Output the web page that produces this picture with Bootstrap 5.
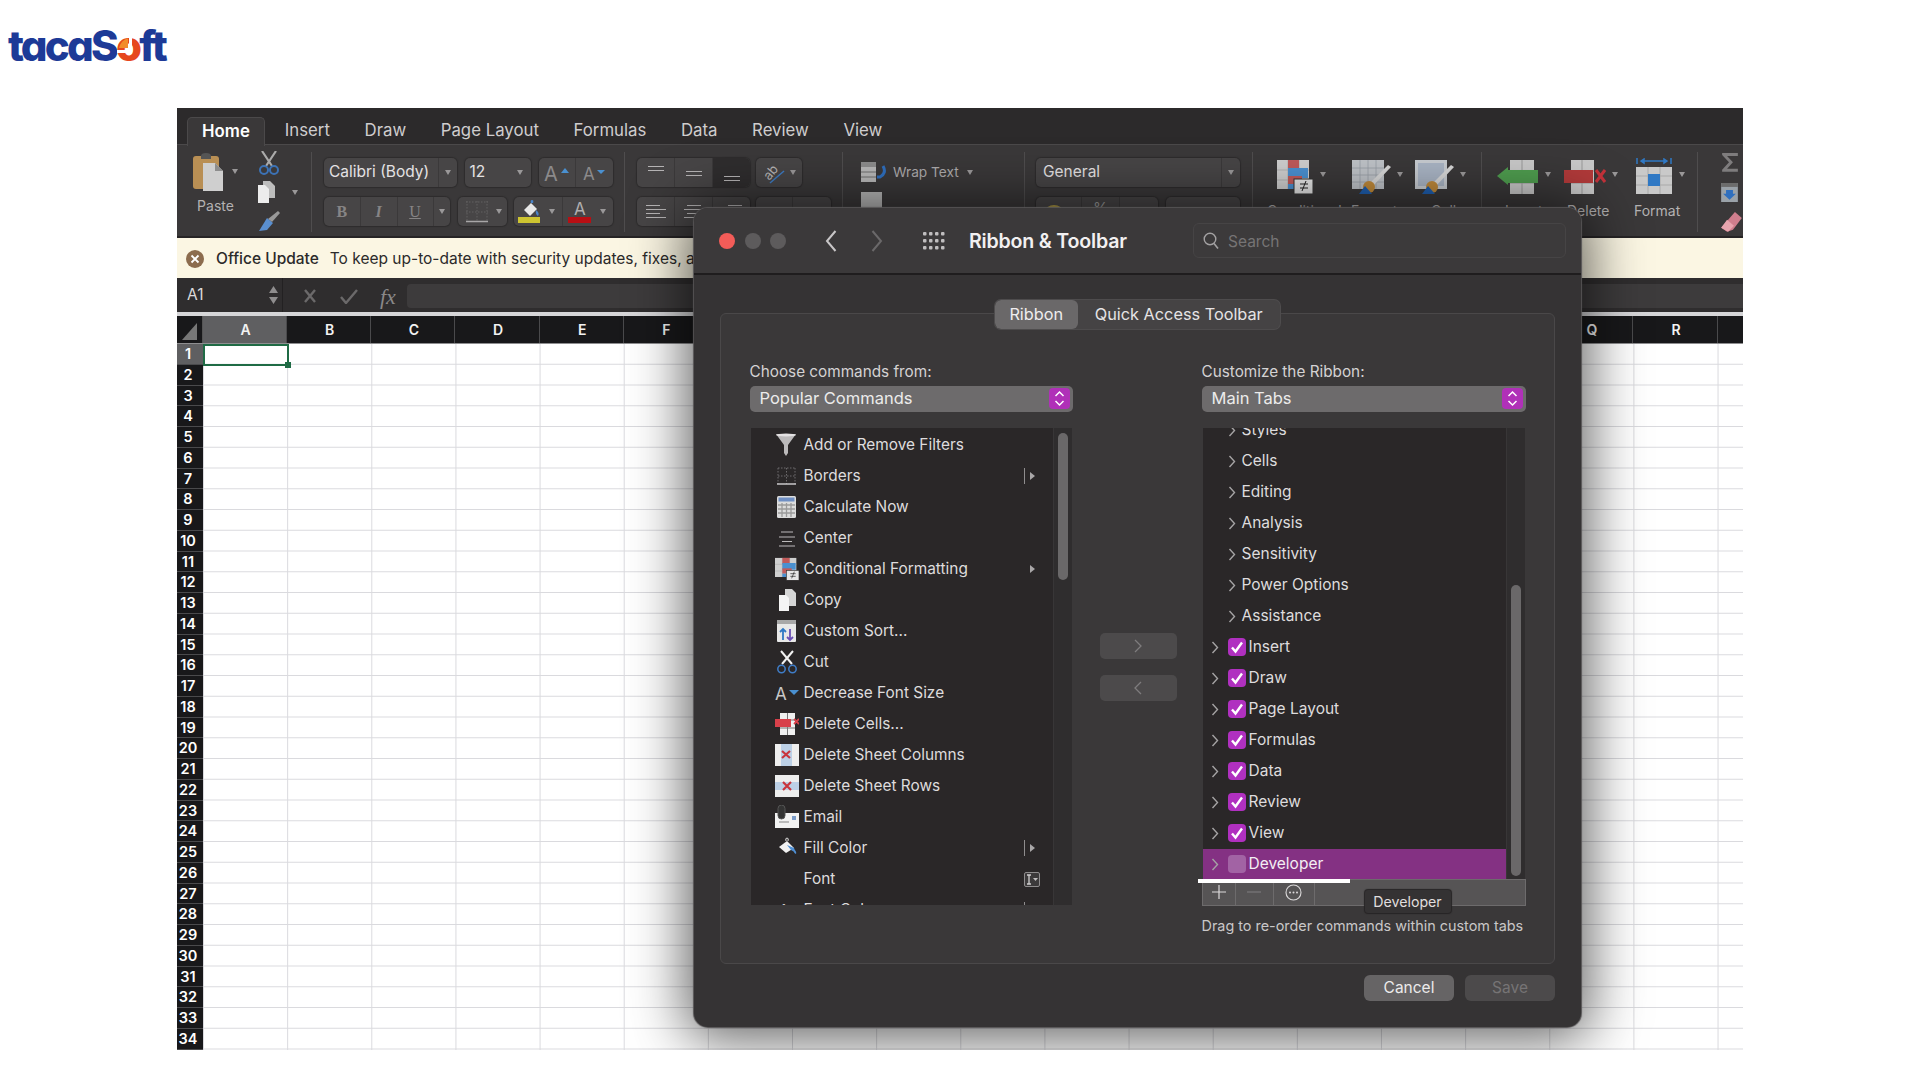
<!DOCTYPE html>
<html lang="en">
<head>
<meta charset="utf-8">
<title>Ribbon &amp; Toolbar</title>
<link href="https://cdn.jsdelivr.net/npm/bootstrap@5.3.0/dist/css/bootstrap.min.css" rel="stylesheet">
<style>
html,body{margin:0;background:#fff;overflow:hidden}
body{font-family:Inter,"Liberation Sans",sans-serif;width:1920px;height:1080px;color:#ddd}
.logo-bar{height:108px;padding:21px 0 0 8px}
.brand{display:inline-block;font:800 42px/50px Inter,"Liberation Sans",sans-serif;letter-spacing:-2.8px;color:#1d3a97;font-feature-settings:"cv11"}
.brand-o{color:#e6471d;position:relative;display:inline-block}
.brand-q{position:absolute;left:1px;top:15px;width:26px;height:30px}
.xl-app{margin-left:177px;width:1566px;height:942px;overflow:hidden;background:#fff}
.tabbar{height:37px;background:#2c2a2b;border-bottom:1px solid #4b494a;padding:9px 0 0 10px;font-size:16.8px;color:#cfcdce}
.xtab{padding:0 17.3px;line-height:26px;white-space:nowrap}
.xtab-on{width:78px;padding:0;text-align:center;background:#3a3839;border:1px solid #4b494a;border-bottom:0;border-radius:5px 5px 0 0;color:#fff;font-weight:600;margin:0 2.5px -1px 0;height:29px}
.ribbon{height:93px;background:#3a3839;border-bottom:2px solid #262425}
.rgroup{height:80px;margin-top:7px;border-right:1px solid #4f4d4e;flex:none;position:relative}
.g1{width:135px;padding-left:16px}.g2{width:313px;padding:6px 0 0 12px}.g3{width:218px;padding:6px 0 0 12px}
.g4{width:182px;padding:8px 0 0 18px}.g5{width:228px;padding:6px 0 0 11px}.g6{width:229px}.g7{width:216px}.g8{width:45px;border:0;padding-left:23px}
.rline{height:29px;gap:8px;margin-bottom:10px}
.ctl{height:29px;background:#474546;border-radius:5px;box-shadow:0 0 1px 1px #2e2c2d;flex:none;overflow:hidden;color:#e4e2e3;font-size:15.5px}
.ctl-txt{padding-bottom:2px}
.seg{height:100%;border-right:1px solid #3b393a;flex:none}
.seg:last-child{border:0}
.tri{width:0;height:0;border-left:4px solid transparent;border-right:4px solid transparent;border-top:5px solid #9a9899;flex:none}
.tri-sm{border-left-width:3.5px;border-right-width:3.5px;border-top-width:5px}
.w132{width:132.5px}.w66{width:66px}.w74{width:74px}.w125{width:125.5px}.w49{width:49px}.w99{width:99px}.w113{width:113px}.w46{width:46px}.w75{width:75px}.w204{width:204px}.w122{width:122px}
.fmt{color:#868485;font:700 16px/1 "Liberation Serif",serif}
.paste-col{width:66px;height:80px}
.paste-lab{font-size:14px;color:#b4b2b3;margin-top:4px;width:45px;text-align:center}
.mini-col{width:45px;margin-left:-1px;margin-top:-1px}
.wrap-lab{font-size:13.7px;color:#aeacad;margin:0 8px 0 7px}
.big-row{height:42px;padding-top:8px}
.lab-row{font-size:14px;color:#b4b2b3;line-height:18px;margin-top:2px;white-space:nowrap}
.update-bar{height:40px;background:#fbf6e3;padding-left:9px;color:#2b2a2a;font-size:15.5px;white-space:nowrap;overflow:hidden;padding-top:2px}
.update-bar b{font-weight:500;margin:0 11px 0 0}
.formula{height:34px;background:#2f2d2e;padding-top:6px;border-bottom:0}
.namebox{width:106px;height:34px;margin-top:-6px;padding:0 0 0 10px;color:#dcdada;font-size:15.5px;border-right:1px solid #232122}
.fx-ico{width:124px;height:24px;color:#777576;font-size:17px}
.fx-in{height:24px;background:#3d3b3c;border-radius:4px 0 0 4px}
.whiteline{height:4px;background:#d6d6d8}
.colhead{height:28px;background:#18181a;color:#f2f2f2;font-size:14px;font-weight:600;line-height:28px;border-bottom:1px solid #8e8e90}
.corner{width:26px;height:100%;flex:none;border-right:1px solid #555}
.colcell{width:84.15px;flex:none;text-align:center;text-indent:2px;border-right:1px solid #4a4a4c}
.colcell-on{background:#5f5f61}
.rowhead{width:26px;flex:none;background:#18181a;color:#fff;font-size:14.5px;font-weight:600}
.rownum{height:20.75px;line-height:20px;text-align:center;padding-right:4px;border-bottom:1px solid #4a4a4c}
.rownum-on{background:#5f5f61}
.cells{height:720px;background-image:linear-gradient(to right,transparent calc(100% - 1.4px),#dadade 0),linear-gradient(to bottom,transparent calc(100% - 1.4px),#dadade 0);background-size:84.15px 20.75px;background-position:1px 0}
.cellsel{position:absolute;left:0;top:0;width:86px;height:22px;border:2px solid #1f6b45}
.cellhandle{position:absolute;right:-4px;bottom:-4px;width:6px;height:6px;background:#1f6b45}
.dlg{position:absolute;left:517px;top:100px;width:887px;height:819px;background:#353334;border-radius:14px;box-shadow:0 0 1px 1px #565455,0 4px 55px 8px rgba(0,0,0,.62);overflow:hidden;display:flex;flex-direction:column}
.dlg-head{height:67px;flex:none;background:#3b393a;border-bottom:2px solid #1f1d1e;padding-left:25px}
.tl{width:16px;height:16px;border-radius:50%;background:#5d5b5c;margin-right:9.5px;flex:none}
.tl-red{background:#f35c58}
.dlg-title{font-size:19.6px;font-weight:600;color:#f2f0f1;margin-left:24px;white-space:nowrap;letter-spacing:-.2px;padding-top:2px}
.dlg-search{margin-left:auto;margin-right:15px;width:373px;height:35px;border:1px solid #464445;border-radius:6px;background:#3c3a3b;color:#767475;font-size:15.5px;padding-left:9px;gap:9px}
.dlg-search span{padding-top:2px}
.dlg-panel{margin:38px 0 0 25.5px;width:835.5px;height:651px;background:#3a3839;border:1px solid #4a4849;border-radius:6px;flex:none}
.segwrap{margin-top:-14.5px;height:29px}
.segctl{height:29px;background:#454344;border-radius:6px;box-shadow:0 0 0 1px #4e4c4d;font-size:16.3px;color:#e6e4e5;width:285px;overflow:hidden}
.seg-on{width:83px;background:#6a6869;border-radius:6px;text-align:center;line-height:29px;color:#efedee}
.seg-off{flex:1;text-align:center;line-height:29px;white-space:nowrap}
.dcols{padding-left:29px}
.lab-top{font-size:15.3px;line-height:18px;margin-top:34px;color:#d4d2d3;white-space:nowrap}
.sel-box{height:26px;margin-top:5px;background:#6d6b6c;border-radius:5px;font-size:16.5px;color:#ecebeb;padding-left:10px}
.stepper{width:21px;height:21px;border-radius:4px;background:#b030b8;margin:0 2.5px 0 auto;flex:none}
.lst{height:477px;margin-top:16px;background:#2a2728;overflow:hidden;margin-left:1px;margin-right:1px}
.lst-r{height:451px;margin-left:1px;margin-right:1px}
.lst-rows{flex:1;min-width:0;overflow:hidden}
.track{width:19px;flex:none;background:#2f2d2e;border-left:1px solid #383637;padding:0 4px}
.thumb{width:10px;background:#6a6869;border-radius:5px}
.th-l{margin-top:5px;height:147px}.th-r{margin-top:157px;height:291px}
.lrow{height:31px;padding-left:24px;font-size:15.4px;color:#dedcdd;white-space:nowrap;padding-right:13px}
.lrow:first-child{margin-top:2px}
.ico{width:24px;height:24px;margin-right:5px;flex:none}
.rmark{margin-left:auto;display:flex;align-items:center;flex:none}
.rbar{width:1px;height:16px;background:#8f8d8e;margin-right:5px}
.rtri{width:0;height:0;border-top:4px solid transparent;border-bottom:4px solid transparent;border-left:5px solid #a9a7a8;margin-right:5px}
.trow{height:31px;font-size:15.5px;color:#dedcdd;white-space:nowrap}
.trow-sub{padding-left:25px}.trow-top{padding-left:8px}
.trow:first-child{margin-top:-13px}
.chev{width:8px;height:13px;flex:none}
.trow-sub .chev{margin-right:6px}
.trow-top .chev{margin-right:9px}
.cb{width:18px;height:18px;border-radius:4px;background:#b030c0;margin-right:3px;flex:none}
.trow-dev{background:#843183;color:#f3eef3}
.cb-off{background:#a263a4}
.mid-col{width:77px;margin:304px 25px 0 27px;flex:none}
.arr-btn{height:26px;background:#4c4a4b;border-radius:5px;margin-bottom:16px}
.rcol{width:324px;flex:none;position:relative}
.lcol{width:323px;flex:none}
.tb-row{height:27px;background:#565455;border:1px solid #6d6b6c;position:relative;font-size:14px}
.tb-btn{height:100%;border-right:1px solid #6d6b6c;flex:none}
.dragline{position:absolute;left:-5px;top:-1px;width:152px;height:4px;background:#fff}
.tipbox{position:absolute;left:162px;top:10px;width:86px;height:23px;background:#343233;box-shadow:0 0 1px 1px #262425;border-radius:3px;text-align:center;line-height:23px;color:#e0dede;font-size:14.2px}
.note{font-size:14.4px;color:#c9c7c8;line-height:20px;margin-top:10px;white-space:nowrap}
.dlg-foot{margin-top:11px;padding-right:26px;gap:11px}
.fbtn{width:90px;height:26px;border-radius:6px;text-align:center;line-height:26px;font-size:15.5px;background:#666465;color:#ecebeb}
.fbtn-off{background:#4c4a4b;color:#767475}
</style>
</head>
<body>
<svg class="d-none" xmlns="http://www.w3.org/2000/svg">
<symbol id="ck" viewBox="0 0 18 18"><path d="M4 9.5l3.5 4L14 4.5" fill="none" stroke="#fff" stroke-width="2.4"/></symbol>
<symbol id="chv" viewBox="0 0 8 13"><path d="M1.5 1l5 5.5-5 5.5" fill="none" stroke="#a5a3a4" stroke-width="1.4"/></symbol>
<symbol id="cf" viewBox="0 0 36 34"><rect width="32" height="29" fill="#cfcfcf"/><path d="M0 10h32M0 20h32M11 0v29M22 0v29" stroke="#aaa" stroke-width=".8"/><rect x="11" width="11" height="10" fill="#c05a5a"/><rect x="11" y="8" width="20" height="10" fill="#4a90d0"/><rect x="11" y="16" width="14" height="8" fill="#c05a5a"/><rect x="11" y="24" width="11" height="5" fill="#4a90d0"/><rect x="17" y="19" width="19" height="15" fill="#e6e6e6" stroke="#333"/><path d="M23 24h8M23 28h8M29 21l-4 10" stroke="#222" fill="none"/></symbol>
<symbol id="tb" viewBox="0 0 40 34"><rect width="32" height="29" fill="#bfc3c8"/><path d="M0 8h32M0 15h32M0 22h32M8 0v29M16 0v29M24 0v29" stroke="#9aa0a6" stroke-width=".8"/><path d="M39 7L20 27l-3-3L36 5z" fill="#d7d7d7"/><circle cx="17" cy="27" r="6" fill="#c08a3a"/><path d="M7 34l6-8 7 8z" fill="#1f5fb0"/></symbol>
<symbol id="cs" viewBox="0 0 40 34"><rect width="32" height="29" fill="#c8ccd1"/><rect x="3" y="3" width="26" height="23" fill="#a9b4c4"/><path d="M39 7L20 27l-3-3L36 5z" fill="#d7d7d7"/><circle cx="17" cy="27" r="6" fill="#c08a3a"/><path d="M7 34l6-8 7 8z" fill="#1f5fb0"/></symbol>
</svg>

<header class="logo-bar"><span class="brand">tacaS<span class="brand-o">o<svg class="brand-q" viewBox="0 0 26 30"><path d="M0 14h12V2h3v15H0z" fill="#fff"/><path d="M2 12C3 7 7 3 11 2.500V12z" fill="#f28c2a"/></svg></span>ft</span></header>

<main class="xl-app position-relative">
  <nav class="tabbar d-flex">
    <div class="xtab xtab-on">Home</div><div class="xtab">Insert</div><div class="xtab">Draw</div><div class="xtab">Page Layout</div><div class="xtab">Formulas</div><div class="xtab">Data</div><div class="xtab">Review</div><div class="xtab">View</div>
  </nav>

  <div class="ribbon d-flex">
    <div class="rgroup g1 d-flex">
      <div class="paste-col">
        <div class="d-flex align-items-center gap-2">
          <svg width="31" height="39" viewBox="0 0 31 39"><rect y="4" width="26" height="33" rx="3" fill="#b98f54"/><path d="M8 4q0-3 5-3t5 3v3H8z" fill="#555"/><path d="M10 11h12l8 8v20H10z" fill="#cfcfcf"/><path d="M22 11v8h8z" fill="#8d8d8d"/></svg>
          <span class="tri tri-sm"></span>
        </div>
        <div class="paste-lab">Paste</div>
      </div>
      <div class="mini-col d-flex flex-column align-items-start">
        <svg width="22" height="24" viewBox="0 0 22 24"><path d="M4 0l10 15M18 0L8 15" stroke="#aaa" stroke-width="2.200"/><circle cx="6" cy="19" r="4" fill="none" stroke="#3c72b5" stroke-width="2"/><circle cx="16" cy="19" r="4" fill="none" stroke="#3c72b5" stroke-width="2"/></svg>
        <div class="d-flex align-items-center gap-3" style="margin-top:6px">
          <svg width="18" height="22" viewBox="0 0 18 22"><path d="M5 0h7l5 5v12H5z" fill="#bdbdbd"/><path d="M0 4h7l4 4v14H0z" fill="#ececec"/></svg>
          <span class="tri tri-sm"></span>
        </div>
        <svg style="margin-top:7px" width="22" height="22" viewBox="0 0 22 22"><path d="M20 1l2 2-8 9-4-3z" fill="#999"/><path d="M9 8l6 5-6 7-8 1z" fill="#5a8fd0"/></svg>
      </div>
    </div>

    <div class="rgroup g2">
      <div class="d-flex rline">
        <div class="ctl w132 d-flex align-items-center"><div class="seg flex-grow-1 d-flex align-items-center ctl-txt" style="padding-left:5px">Calibri (Body)</div><div class="d-flex align-items-center justify-content-center" style="width:18px"><span class="tri tri-sm"></span></div></div>
        <div class="ctl w66 d-flex align-items-center pe-2 justify-content-between" style="padding-left:5px"><span class="ctl-txt">12</span><span class="tri tri-sm"></span></div>
        <div class="ctl w74 d-flex align-items-center">
          <div class="seg d-flex align-items-center justify-content-center" style="width:37px"><svg width="28" height="22" viewBox="0 0 28 22"><text x="1" y="19" font-size="20" fill="#8c8a8b" font-family="Inter,sans-serif">A</text><path d="M18 11l4-5 4 5z" fill="#4a90d0"/></svg></div>
          <div class="seg d-flex align-items-center justify-content-center" style="width:37px"><svg width="24" height="22" viewBox="0 0 24 22"><text x="1" y="18" font-size="17" fill="#8c8a8b" font-family="Inter,sans-serif">A</text><path d="M15 8h8l-4 4z" fill="#4a90d0"/></svg></div>
        </div>
      </div>
      <div class="d-flex rline">
        <div class="ctl w125 d-flex align-items-center">
          <div class="seg fmt d-flex align-items-center justify-content-center" style="width:36.500px">B</div>
          <div class="seg fmt d-flex align-items-center justify-content-center fst-italic" style="width:37px">I</div>
          <div class="seg fmt d-flex align-items-center justify-content-center text-decoration-underline fw-normal" style="width:36px">U</div>
          <div class="d-flex align-items-center justify-content-center flex-grow-1"><span class="tri tri-sm"></span></div>
        </div>
        <div class="ctl w49 d-flex align-items-center ps-2 gap-2"><svg width="22" height="22" viewBox="0 0 22 22"><path d="M0 1h22M0 11h22M1 0v20M21 0v20M11 0v20" stroke="#626061" stroke-dasharray="1.5 1.5" fill="none"/><path d="M0 20.500h22" stroke="#a8a6a7" stroke-width="1.400"/></svg><span class="tri tri-sm"></span></div>
        <div class="ctl w99 d-flex align-items-center" style="margin-left:-1px">
          <div class="seg d-flex align-items-center" style="width:49px;padding-left:3px">
            <svg width="24" height="24" viewBox="0 0 24 24"><path d="M7 10l7-7 6 6-7 7z" fill="#e8e8e8"/><path d="M14 3q-1-3 1-3t1 3M19 10q4 3 2 6-3-2-2-6z" fill="#4a84c8"/><rect x="1" y="17" width="22" height="6" fill="#cdc431"/></svg>
            <span class="tri tri-sm ms-2"></span>
          </div>
          <div class="d-flex align-items-center" style="padding-left:5px">
            <svg width="24" height="24" viewBox="0 0 24 24"><text x="6" y="15" font-size="17" fill="#b0aeaf" font-family="Inter,sans-serif">A</text><rect y="17" width="23" height="6" fill="#b80f14"/></svg>
            <span class="tri tri-sm ms-2"></span>
          </div>
        </div>
      </div>
    </div>

    <div class="rgroup g3">
      <div class="d-flex rline" style="gap:6px">
        <div class="ctl w113 d-flex">
          <div class="seg d-flex justify-content-center" style="width:38px"><svg width="16" height="29" viewBox="0 0 16 29"><path d="M0 8.500h16M0 12.500h16" stroke="#b6b4b5"/></svg></div>
          <div class="seg d-flex justify-content-center" style="width:38px"><svg width="16" height="29" viewBox="0 0 16 29"><path d="M0 13.500h16M0 17.500h16" stroke="#b6b4b5"/></svg></div>
          <div class="d-flex justify-content-center flex-grow-1" style="background:#2f2d2e"><svg width="16" height="29" viewBox="0 0 16 29"><path d="M0 18.500h16M0 22.500h16" stroke="#b6b4b5"/></svg></div>
        </div>
        <div class="ctl w46 d-flex align-items-center ps-2 gap-1"><svg width="22" height="24" viewBox="0 0 22 24"><text x="0" y="15" font-size="13" fill="#b6b4b5" font-family="Inter,sans-serif" transform="rotate(-50 8 12)">ab</text><path d="M6 22L20 10" stroke="#3e7cc4" stroke-width="1.500"/></svg><span class="tri tri-sm"></span></div>
      </div>
      <div class="d-flex rline" style="gap:6px">
        <div class="ctl w113 d-flex">
          <div class="seg d-flex justify-content-center align-items-center" style="width:38px"><svg width="20" height="16" viewBox="0 0 20 16"><path d="M0 1.500h14M0 5.500h20M0 9.500h14M0 13.500h20" stroke="#b6b4b5"/></svg></div>
          <div class="seg d-flex justify-content-center align-items-center" style="width:38px"><svg width="20" height="16" viewBox="0 0 20 16"><path d="M3 1.500h14M0 5.500h20M3 9.500h14M0 13.500h20" stroke="#b6b4b5"/></svg></div>
          <div class="d-flex justify-content-center align-items-center flex-grow-1"><svg width="20" height="16" viewBox="0 0 20 16"><path d="M6 1.500h14M0 5.500h20M6 9.500h14M0 13.500h20" stroke="#b6b4b5"/></svg></div>
        </div>
        <div class="ctl w75 d-flex"><div class="seg" style="width:37px"></div><div></div></div>
      </div>
    </div>

    <div class="rgroup g4">
      <div class="d-flex align-items-center">
        <svg width="25" height="24" viewBox="0 0 25 24"><rect y="2" width="15" height="20" fill="#b9b9b9"/><rect y="2" width="15" height="5" fill="#8c8c8c"/><path d="M0 12h15M0 17h15" stroke="#6f6f6f"/><path d="M22 6q4 7-3 11l-3 0" fill="none" stroke="#2f6fbe" stroke-width="3"/></svg>
        <span class="wrap-lab">Wrap Text</span><span class="tri tri-sm"></span>
      </div>
      <svg class="mt-2 d-block" width="22" height="16" viewBox="0 0 22 16"><rect width="21" height="16" fill="#b9b9b9"/></svg>
    </div>

    <div class="rgroup g5">
      <div class="d-flex rline"><div class="ctl w204 d-flex align-items-center"><div class="seg flex-grow-1 d-flex align-items-center ctl-txt" style="padding-left:7px">General</div><div class="d-flex justify-content-center" style="width:18px"><span class="tri tri-sm"></span></div></div></div>
      <div class="d-flex rline">
        <div class="ctl w122 d-flex align-items-center"><div class="seg d-flex align-items-center ps-2" style="width:46px"><svg width="20" height="16" viewBox="0 0 20 16"><ellipse cx="10" cy="8" rx="9" ry="7" fill="#b09b45"/></svg></div><div class="seg text-center" style="width:38px;color:#999">%</div><div class="flex-grow-1"></div></div>
        <div class="ctl w74"></div>
      </div>
    </div>

    <div class="rgroup g6">
      <div class="d-flex big-row align-items-start" style="padding-left:24px">
        <svg width="36" height="34"><use href="#cf"/></svg><span class="tri tri-sm" style="margin:12px 26px 0 7px"></span>
        <svg width="40" height="34"><use href="#tb"/></svg><span class="tri tri-sm" style="margin:12px 12px 0 5px"></span>
        <svg width="40" height="34"><use href="#cs"/></svg><span class="tri tri-sm" style="margin:12px 0 0 5px"></span>
      </div>
      <div class="lab-row d-flex" style="padding-left:14px;margin-top:8px"><span style="width:84px">Conditional</span><span style="width:80px">Format</span><span>Cell</span></div>
    </div>

    <div class="rgroup g7">
      <div class="d-flex big-row align-items-start" style="padding-left:15px">
        <svg width="41" height="34" viewBox="0 0 41 34"><rect x="13" width="24" height="34" fill="#c9c9c9"/><path d="M13 11h24M13 23h24M25 0v34" stroke="#999"/><rect x="11" y="10" width="30" height="13" fill="#4f9d4f"/><path d="M0 16l11-9v18z" fill="#4f9d4f"/></svg><span class="tri tri-sm" style="margin:12px 13px 0 7px"></span>
        <svg width="42" height="34" viewBox="0 0 42 34"><rect x="7" width="23" height="34" fill="#c9c9c9"/><path d="M7 11h23M7 23h23M18 0v34" stroke="#999"/><rect y="10" width="29" height="13" fill="#b23a3a"/><path d="M32 10l9 12M41 10l-9 12" stroke="#c4323a" stroke-width="3"/></svg><span class="tri tri-sm" style="margin:12px 18px 0 6px"></span>
        <svg width="36" height="36" viewBox="0 0 36 36" style="margin-top:-2px"><rect y="9" width="36" height="27" fill="#c9c9c9"/><path d="M0 18h36M0 27h36M12 9v27M24 9v27" stroke="#a9a9a9"/><rect x="12" y="16" width="12" height="12" fill="#2f78c4"/><path d="M1 0v6M35 0v6M5 3h26M5 3l3-2v4zM31 3l-3-2v4z" stroke="#2f78c4" stroke-width="1.500" fill="none"/></svg><span class="tri tri-sm" style="margin:12px 0 0 7px"></span>
      </div>
      <div class="lab-row d-flex" style="padding-left:23px;margin-top:8px"><span style="width:62px">Insert</span><span style="width:67px">Delete</span><span>Format</span></div>
    </div>

    <div class="rgroup g8 d-flex flex-column" style="gap:10px">
      <svg width="18" height="21" viewBox="0 0 18 21"><path d="M1 1h16v3H6l6 6.500L6 17h11v3H1v-2l7-7.500L1 3z" fill="#7e7c7d"/></svg>
      <svg width="17" height="20" viewBox="0 0 17 20"><rect width="17" height="20" fill="#9aa2a9"/><rect y="0" width="17" height="4" fill="#6c6c6c"/><path d="M5 7h7v4h3l-6.500 6L2 11h3z" fill="#2f6fbe"/></svg>
      <svg width="21" height="20" viewBox="0 0 21 20"><path d="M14 0l7 6-9 12-6 2-6-4z" fill="#cf7e8d"/><path d="M0 16l6-8 7 6-6 6z" fill="#e8a4ae"/></svg>
    </div>
  </div>

  <div class="update-bar d-flex align-items-center">
    <svg width="18" height="18" viewBox="0 0 18 18" class="me-2 flex-shrink-0"><circle cx="9" cy="9" r="9" fill="#8c6c4e"/><path d="M5.500 5.500l7 7M12.500 5.500l-7 7" stroke="#fff" stroke-width="1.800"/></svg>
    <b class="ms-1">Office Update</b><span>To keep up-to-date with security updates, fixes, and improvements, choose Check for Updates.</span>
  </div>

  <div class="formula d-flex">
    <div class="namebox d-flex align-items-center justify-content-between pe-1">A1
      <svg width="9" height="22" viewBox="0 0 9 22"><path d="M4.500 2L9 9H0zM4.500 20L0 13h9z" fill="#8f8d8e"/></svg>
    </div>
    <div class="fx-ico d-flex align-items-center">
      <svg style="margin-left:20px" width="14" height="14" viewBox="0 0 14 14"><path d="M2 1l10 12M12 1L2 13" stroke="#6b696a" stroke-width="2.400"/></svg>
      <svg style="margin-left:23px" width="18" height="15" viewBox="0 0 18 15"><path d="M1 8l5 6L17 1" fill="none" stroke="#6b696a" stroke-width="2.400"/></svg>
      <span class="fst-italic" style="font-family:'Liberation Serif',serif;font-size:22px;margin-left:22px;color:#8a8889">fx</span>
    </div>
    <div class="fx-in flex-grow-1"></div>
  </div>
  <div class="whiteline"></div>

  <div class="colhead d-flex">
    <div class="corner"><svg width="25" height="27" viewBox="0 0 25 27" class="d-block"><path d="M20 7v17H5z" fill="#777"/></svg></div>
    <div class="colcell colcell-on">A</div><div class="colcell">B</div><div class="colcell">C</div><div class="colcell">D</div><div class="colcell">E</div><div class="colcell">F</div><div class="colcell">G</div><div class="colcell">H</div><div class="colcell">I</div><div class="colcell">J</div><div class="colcell">K</div><div class="colcell">L</div><div class="colcell">M</div><div class="colcell">N</div><div class="colcell">O</div><div class="colcell">P</div><div class="colcell">Q</div><div class="colcell">R</div>
  </div>
  <div class="d-flex">
    <div class="rowhead">
      <div class="rownum rownum-on">1</div><div class="rownum">2</div><div class="rownum">3</div><div class="rownum">4</div><div class="rownum">5</div><div class="rownum">6</div><div class="rownum">7</div><div class="rownum">8</div><div class="rownum">9</div><div class="rownum">10</div><div class="rownum">11</div><div class="rownum">12</div><div class="rownum">13</div><div class="rownum">14</div><div class="rownum">15</div><div class="rownum">16</div><div class="rownum">17</div><div class="rownum">18</div><div class="rownum">19</div><div class="rownum">20</div><div class="rownum">21</div><div class="rownum">22</div><div class="rownum">23</div><div class="rownum">24</div><div class="rownum">25</div><div class="rownum">26</div><div class="rownum">27</div><div class="rownum">28</div><div class="rownum">29</div><div class="rownum">30</div><div class="rownum">31</div><div class="rownum">32</div><div class="rownum">33</div><div class="rownum">34</div>
    </div>
    <div class="cells flex-grow-1 position-relative"><div class="cellsel"><div class="cellhandle"></div></div></div>
  </div>

  <section class="dlg">
    <div class="dlg-head d-flex align-items-center">
      <span class="tl tl-red"></span><span class="tl"></span><span class="tl"></span>
      <svg style="margin-left:29.500px" width="12" height="24" viewBox="0 0 12 24"><path d="M10.500 2L2 12l8.500 10" fill="none" stroke="#c8c6c7" stroke-width="2"/></svg>
      <svg style="margin-left:34px" width="12" height="24" viewBox="0 0 12 24"><path d="M1.500 2L10 12 1.500 22" fill="none" stroke="#6a6869" stroke-width="2"/></svg>
      <svg style="margin-left:40px" width="22" height="18" viewBox="0 0 22 18"><g fill="#c0bebf"><rect x="0" y="0" width="3.500" height="3.500" rx="1"/><rect x="6" y="0" width="3.500" height="3.500" rx="1"/><rect x="12" y="0" width="3.500" height="3.500" rx="1"/><rect x="18" y="0" width="3.500" height="3.500" rx="1"/><rect x="0" y="7" width="3.500" height="3.500" rx="1"/><rect x="6" y="7" width="3.500" height="3.500" rx="1"/><rect x="12" y="7" width="3.500" height="3.500" rx="1"/><rect x="18" y="7" width="3.500" height="3.500" rx="1"/><rect x="0" y="14" width="3.500" height="3.500" rx="1"/><rect x="6" y="14" width="3.500" height="3.500" rx="1"/><rect x="12" y="14" width="3.500" height="3.500" rx="1"/><rect x="18" y="14" width="3.500" height="3.500" rx="1"/></g></svg>
      <span class="dlg-title">Ribbon &amp; Toolbar</span>
      <div class="dlg-search d-flex align-items-center">
        <svg width="16" height="18" viewBox="0 0 16 18"><circle cx="7" cy="7" r="5.800" fill="none" stroke="#a3a1a2" stroke-width="1.400"/><path d="M11 11.500l4 5" stroke="#a3a1a2" stroke-width="1.600"/></svg>
        <span>Search</span>
      </div>
    </div>

    <div class="dlg-panel">
      <div class="segwrap d-flex justify-content-center"><div class="segctl d-flex"><div class="seg-on">Ribbon</div><div class="seg-off">Quick Access Toolbar</div></div></div>
      <div class="dcols d-flex">
        <div class="lcol">
          <div class="lab-top">Choose commands from:</div>
          <div class="sel-box d-flex align-items-center"><span>Popular Commands</span>
            <span class="stepper d-flex align-items-center justify-content-center"><svg width="11" height="17" viewBox="0 0 11 17"><path d="M1.500 6l4-4 4 4M1.500 11l4 4 4-4" fill="none" stroke="#fff" stroke-width="1.500"/></svg></span>
          </div>
          <div class="lst d-flex">
            <div class="lst-rows">
              <div class="lrow d-flex align-items-center"><svg class="ico" viewBox="0 0 24 24"><path d="M1 1h20l-8 11v8l-2 3-2-3v-8z" fill="#bcbabb"/><ellipse cx="11" cy="2" rx="10" ry="1.500" fill="#e4e2e3"/></svg>Add or Remove Filters</div>
              <div class="lrow d-flex align-items-center"><svg class="ico" viewBox="0 0 24 24"><path d="M3 4h17M3 12h17M3 4v16M20 4v16M11.500 4v16" fill="none" stroke="#6d6b6c" stroke-dasharray="1.500 1.500"/><path d="M2 20h19" stroke="#d5d3d4" stroke-width="1.400"/></svg>Borders<span class="rmark"><span class="rbar"></span><span class="rtri"></span></span></div>
              <div class="lrow d-flex align-items-center"><svg class="ico" viewBox="0 0 24 24"><rect x="2" y="1" width="19" height="22" rx="1.500" fill="#dcdcdc"/><rect x="3.500" y="2.500" width="16" height="4" fill="#6f8fc4"/><path d="M3 10h17M3 14h17M3 18h17M7 8v14M11.500 8v14M16 8v14" stroke="#9a9a9a" stroke-width="1.300"/></svg>Calculate Now</div>
              <div class="lrow d-flex align-items-center"><svg class="ico" viewBox="0 0 24 24"><path d="M6 6h12M4 11h16M7 15.500h10M4 20h16" stroke="#bcbabb" stroke-width="1.200"/></svg>Center</div>
              <div class="lrow d-flex align-items-center"><svg class="ico" viewBox="0 0 36 34"><use href="#cf"/></svg>Conditional Formatting<span class="rmark"><span class="rtri"></span></span></div>
              <div class="lrow d-flex align-items-center"><svg class="ico" viewBox="0 0 24 24"><path d="M10 1h7l4 4v13H10z" fill="#d5d5d5"/><path d="M4 7h7l3 3v13H4z" fill="#f4f4f4"/></svg>Copy</div>
              <div class="lrow d-flex align-items-center"><svg class="ico" viewBox="0 0 24 24"><rect x="2" y="1" width="19" height="22" rx="1" fill="#e8e8e8"/><rect x="2" y="1" width="19" height="4" fill="#a8a8a8"/><path d="M8 21V10M5 13l3-3 3 3" fill="none" stroke="#2f78c4" stroke-width="1.800"/><path d="M15 10v11M12 18l3 3 3-3" fill="none" stroke="#6a4fb5" stroke-width="1.800"/></svg>Custom Sort...</div>
              <div class="lrow d-flex align-items-center"><svg class="ico" viewBox="0 0 24 24"><path d="M6 1l11 13M18 1L7 14" stroke="#f2f2f2" stroke-width="2"/><circle cx="6.500" cy="19" r="3.700" fill="none" stroke="#3f7dc8" stroke-width="1.500"/><circle cx="17.500" cy="19" r="3.700" fill="none" stroke="#3f7dc8" stroke-width="1.500"/></svg>Cut</div>
              <div class="lrow d-flex align-items-center"><svg class="ico" viewBox="0 0 24 24"><text x="0" y="19" font-size="17" fill="#c9c7c8" font-family="Inter,sans-serif">A</text><path d="M14 9h10l-5 5z" fill="#4a90d0"/></svg>Decrease Font Size</div>
              <div class="lrow d-flex align-items-center"><svg class="ico" viewBox="0 0 24 24"><rect x="5" y="1" width="15" height="22" fill="#f0f0f0"/><path d="M5 8h15M5 16h15M12.500 1v22" stroke="#777"/><rect x="0" y="7" width="16" height="8" fill="#d8404a"/><path d="M19 7l5 5M24 7l-5 5" stroke="#d8404a" stroke-width="1.800"/></svg>Delete Cells...</div>
              <div class="lrow d-flex align-items-center"><svg class="ico" viewBox="0 0 24 24"><rect y="1" width="24" height="22" fill="#eee"/><rect x="6" y="1" width="11" height="22" fill="#bcd0e6"/><path d="M7 8l8 7M15 8l-8 7" stroke="#c9343c" stroke-width="2.200"/></svg>Delete Sheet Columns</div>
              <div class="lrow d-flex align-items-center"><svg class="ico" viewBox="0 0 24 24"><rect y="1" width="24" height="22" fill="#eee"/><rect y="8" width="24" height="8" fill="#bcd0e6"/><path d="M8 8l8 8M16 8l-8 8" stroke="#c9343c" stroke-width="2.200"/></svg>Delete Sheet Rows</div>
              <div class="lrow d-flex align-items-center"><svg class="ico" viewBox="0 0 24 24"><rect y="8" width="24" height="15" fill="#f2f2f2"/><rect x="17" y="11" width="4" height="4" fill="#7c9cc8"/><path d="M4 17h10" stroke="#bbb" stroke-width="2"/><rect x="3" y="0" width="7" height="14" rx="3.500" fill="#333" stroke="#555"/></svg>Email</div>
              <div class="lrow d-flex align-items-center"><svg class="ico" viewBox="0 0 24 24"><path d="M4 11l8-6 7 7-8 5z" fill="#f2f2f2"/><path d="M11 5q-1-3 1-3t1 3" fill="none" stroke="#ddd"/><path d="M12 9l7 3 2 5-5-3zM19 13q3 3 2 5-3-1-2-5z" fill="#4f8fd4"/></svg>Fill Color<span class="rmark"><span class="rbar"></span><span class="rtri"></span></span></div>
              <div class="lrow d-flex align-items-center"><span class="ico"></span>Font<span class="rmark"><svg width="16" height="15" viewBox="0 0 16 15"><rect x=".5" y=".5" width="15" height="14" rx="1.500" fill="#3c3a3b" stroke="#8f8d8e"/><path d="M3 3h4M3 12h4M5 3v9" stroke="#d0cecf" stroke-width="1.300"/><path d="M9 6h5l-2.500 3z" fill="#c0bebf"/></svg></span></div>
              <div class="lrow d-flex align-items-center"><svg class="ico" viewBox="0 0 24 24"><text x="3" y="19" font-size="17" fill="#c9c7c8" font-family="Inter,sans-serif">A</text></svg>Font Color<span class="rmark"><span class="rbar"></span><span class="rtri"></span></span></div>
            </div>
            <div class="track"><div class="thumb th-l"></div></div>
          </div>
        </div>

        <div class="mid-col">
          <div class="arr-btn d-flex align-items-center justify-content-center"><svg width="8" height="14" viewBox="0 0 8 14"><path d="M1 1l6 6-6 6" fill="none" stroke="#7e7c7d" stroke-width="1.300"/></svg></div>
          <div class="arr-btn d-flex align-items-center justify-content-center"><svg width="8" height="14" viewBox="0 0 8 14"><path d="M7 1L1 7l6 6" fill="none" stroke="#7e7c7d" stroke-width="1.300"/></svg></div>
        </div>

        <div class="rcol">
          <div class="lab-top">Customize the Ribbon:</div>
          <div class="sel-box d-flex align-items-center"><span>Main Tabs</span>
            <span class="stepper d-flex align-items-center justify-content-center"><svg width="11" height="17" viewBox="0 0 11 17"><path d="M1.500 6l4-4 4 4M1.500 11l4 4 4-4" fill="none" stroke="#fff" stroke-width="1.500"/></svg></span>
          </div>
          <div class="lst lst-r d-flex">
            <div class="lst-rows">
              <div class="trow trow-sub d-flex align-items-center"><svg class="chev"><use href="#chv"/></svg>Styles</div>
              <div class="trow trow-sub d-flex align-items-center"><svg class="chev"><use href="#chv"/></svg>Cells</div>
              <div class="trow trow-sub d-flex align-items-center"><svg class="chev"><use href="#chv"/></svg>Editing</div>
              <div class="trow trow-sub d-flex align-items-center"><svg class="chev"><use href="#chv"/></svg>Analysis</div>
              <div class="trow trow-sub d-flex align-items-center"><svg class="chev"><use href="#chv"/></svg>Sensitivity</div>
              <div class="trow trow-sub d-flex align-items-center"><svg class="chev"><use href="#chv"/></svg>Power Options</div>
              <div class="trow trow-sub d-flex align-items-center"><svg class="chev"><use href="#chv"/></svg>Assistance</div>
              <div class="trow trow-top d-flex align-items-center"><svg class="chev"><use href="#chv"/></svg><span class="cb d-flex"><svg width="18" height="18"><use href="#ck"/></svg></span>Insert</div>
              <div class="trow trow-top d-flex align-items-center"><svg class="chev"><use href="#chv"/></svg><span class="cb d-flex"><svg width="18" height="18"><use href="#ck"/></svg></span>Draw</div>
              <div class="trow trow-top d-flex align-items-center"><svg class="chev"><use href="#chv"/></svg><span class="cb d-flex"><svg width="18" height="18"><use href="#ck"/></svg></span>Page Layout</div>
              <div class="trow trow-top d-flex align-items-center"><svg class="chev"><use href="#chv"/></svg><span class="cb d-flex"><svg width="18" height="18"><use href="#ck"/></svg></span>Formulas</div>
              <div class="trow trow-top d-flex align-items-center"><svg class="chev"><use href="#chv"/></svg><span class="cb d-flex"><svg width="18" height="18"><use href="#ck"/></svg></span>Data</div>
              <div class="trow trow-top d-flex align-items-center"><svg class="chev"><use href="#chv"/></svg><span class="cb d-flex"><svg width="18" height="18"><use href="#ck"/></svg></span>Review</div>
              <div class="trow trow-top d-flex align-items-center"><svg class="chev"><use href="#chv"/></svg><span class="cb d-flex"><svg width="18" height="18"><use href="#ck"/></svg></span>View</div>
              <div class="trow trow-top trow-dev d-flex align-items-center"><svg class="chev"><use href="#chv"/></svg><span class="cb cb-off"></span>Developer</div>
            </div>
            <div class="track"><div class="thumb th-r"></div></div>
          </div>
          <div class="tb-row d-flex">
            <div class="tb-btn d-flex align-items-center justify-content-center" style="width:33px"><svg width="14" height="14" viewBox="0 0 14 14"><path d="M7 0v14M0 7h14" stroke="#dcdadb" stroke-width="1.200"/></svg></div>
            <div class="tb-btn d-flex align-items-center justify-content-center" style="width:38px"><svg width="14" height="2" viewBox="0 0 14 2"><path d="M0 1h14" stroke="#7b797a" stroke-width="1.200"/></svg></div>
            <div class="tb-btn d-flex align-items-center justify-content-center" style="width:41px"><svg width="17" height="17" viewBox="0 0 17 17"><circle cx="8.500" cy="8.500" r="7.500" fill="none" stroke="#dcdadb" stroke-width="1.100"/><circle cx="5" cy="8.500" r="1" fill="#dcdadb"/><circle cx="8.500" cy="8.500" r="1" fill="#dcdadb"/><circle cx="12" cy="8.500" r="1" fill="#dcdadb"/></svg></div>
            <div class="dragline"></div>
            <div class="tipbox">Developer</div>
          </div>
          <div class="note">Drag to re-order commands within custom tabs</div>
        </div>
      </div>
    </div>

    <div class="dlg-foot d-flex justify-content-end">
      <div class="fbtn">Cancel</div><div class="fbtn fbtn-off">Save</div>
    </div>
  </section>
</main>
<script src="https://cdn.jsdelivr.net/npm/bootstrap@5.3.0/dist/js/bootstrap.bundle.min.js"></script>
</body>
</html>
